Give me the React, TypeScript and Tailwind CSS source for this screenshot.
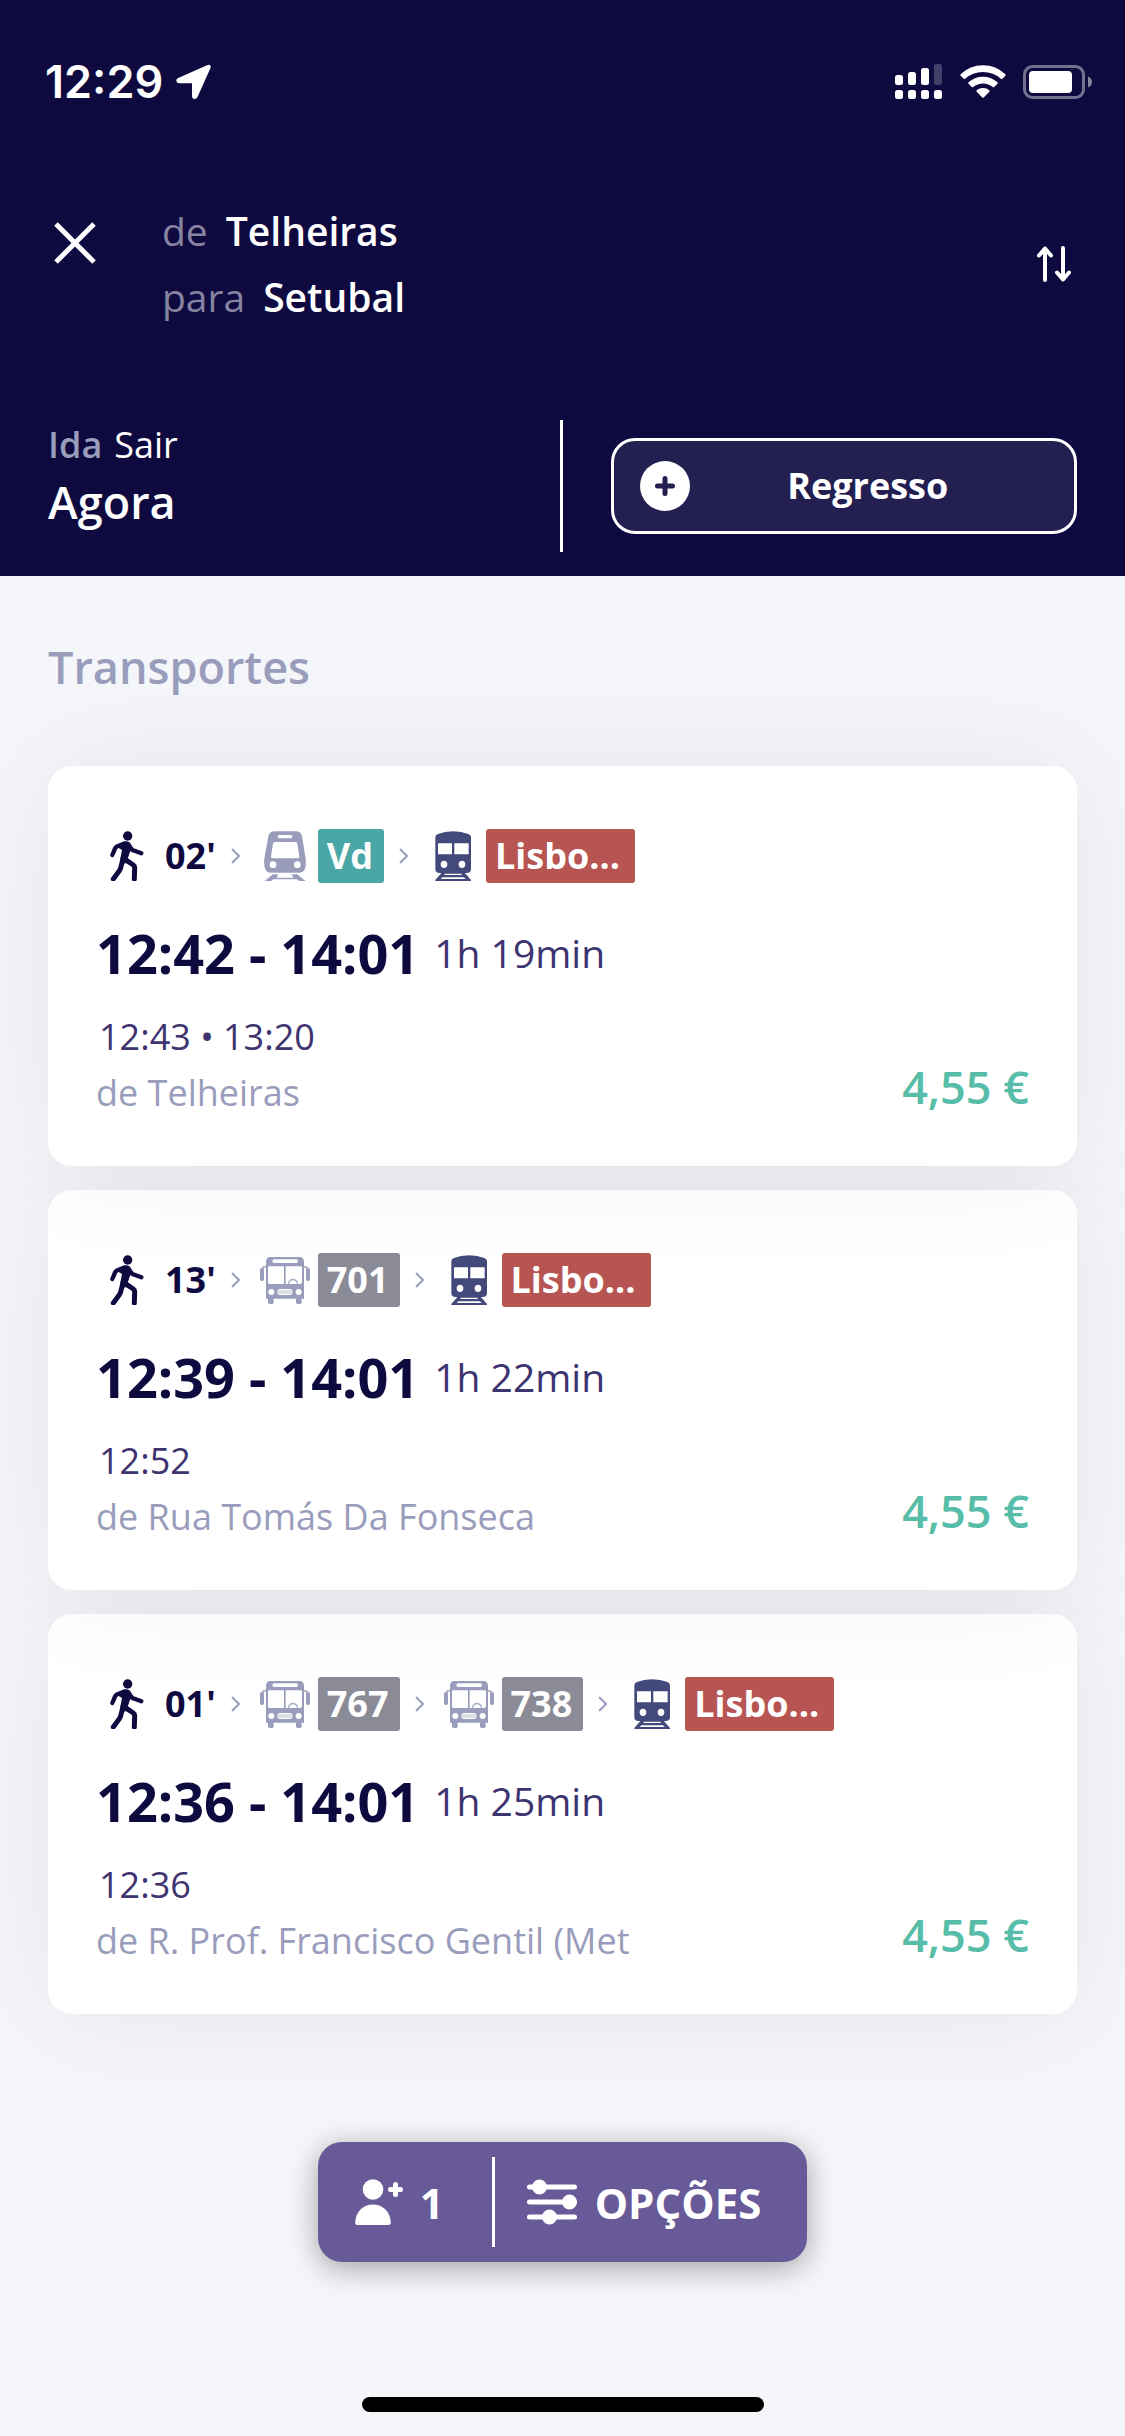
import React from 'react';

type Mode = 'metro' | 'bus' | 'train';

interface Leg {
  mode: Mode;
  line: string;
  color: string;
}

interface Trip {
  id: number;
  walk: string;
  legs: Leg[];
  schedule: string;
  duration: string;
  departures: string;
  origin: string;
  price: string;
  layer: string;
}

const GREEN = 'bg-[#4ba6a6] pr-[11px]';
const GRAY = 'bg-[#8b8a97] pr-[11px]';
const RED = 'bg-[#b75552] pr-[15px]';

// earlier cards sit above the following ones so that their shadow falls on them
const trips: Trip[] = [
  {
    id: 1,
    walk: "02'",
    legs: [
      { mode: 'metro', line: 'Vd', color: GREEN },
      { mode: 'train', line: 'Lisbo...', color: RED },
    ],
    schedule: '12:42 - 14:01',
    duration: '1h 19min',
    departures: '12:43 • 13:20',
    origin: 'de Telheiras',
    price: '4,55 €',
    layer: 'z-30',
  },
  {
    id: 2,
    walk: "13'",
    legs: [
      { mode: 'bus', line: '701', color: GRAY },
      { mode: 'train', line: 'Lisbo...', color: RED },
    ],
    schedule: '12:39 - 14:01',
    duration: '1h 22min',
    departures: '12:52',
    origin: 'de Rua Tomás Da Fonseca',
    price: '4,55 €',
    layer: 'z-20',
  },
  {
    id: 3,
    walk: "01'",
    legs: [
      { mode: 'bus', line: '767', color: GRAY },
      { mode: 'bus', line: '738', color: GRAY },
      { mode: 'train', line: 'Lisbo...', color: RED },
    ],
    schedule: '12:36 - 14:01',
    duration: '1h 25min',
    departures: '12:36',
    origin: 'de R. Prof. Francisco Gentil (Met',
    price: '4,55 €',
    layer: 'z-10',
  },
];

function WalkIcon() {
  return (
    <svg className="h-[50px] w-12 shrink-0" viewBox="42 47 144 150" fill="none" stroke="#0e0a40" strokeLinecap="round" strokeLinejoin="round">
      <circle cx="113" cy="62" r="14" fill="#0e0a40" stroke="none" />
      <path d="M98 79Q110 75 120 82L126 96L119 112L113 130L117 142L92 146L90 134L96 104L86 98Z" fill="#0e0a40" stroke="none" />
      <path d="M102 85L82 93Q77 95 75 100L67 119" strokeWidth="13" />
      <path d="M115 88L127 104L154 114" strokeWidth="13" />
      <path d="M105 132L130 149Q134 152 134 157L133 191" strokeWidth="15" />
      <path d="M98 134L92 158Q91 162 88 166L70 191" strokeWidth="15" />
    </svg>
  );
}

function MetroIcon() {
  return (
    <svg className="h-[50px] w-12 shrink-0" viewBox="516 47 144 150" fill="#999dbb">
      <path
        fillRule="evenodd"
        d="M558 48H620Q636 48 639 63L650 130Q654 172 630 172H546Q522 172 526 130L538 63Q541 48 558 48ZM571 59Q566 59 566 64Q566 69 571 69H605Q610 69 610 64Q610 59 605 59ZM558 80Q553 80 552 85L546 123Q545 129 551 129H626Q632 129 631 123L625 85Q624 80 619 80ZM552 138A10 10 0 1 0 552 158A10 10 0 1 0 552 138ZM625 138A10 10 0 1 0 625 158A10 10 0 1 0 625 138Z"
      />
      <path d="M552 177H566V182H610V177H624L651 198H632L624 192H553L545 198H526Z" />
      <path d="M567 182H609L615 187H561Z" fill="#fff" />
    </svg>
  );
}

function TrainIcon() {
  return (
    <svg className="h-[50px] w-12 shrink-0" viewBox="1020 47 144 150" fill="#43497a">
      <path
        fillRule="evenodd"
        d="M1039 66Q1039 59 1047 56Q1067 48 1092 48Q1118 48 1138 56Q1146 59 1146 66V160Q1146 173 1133 173H1052Q1039 173 1039 160ZM1047 84V117H1089V84ZM1096 84V117H1139V84ZM1065 136A10 11 0 1 0 1065 158A10 11 0 1 0 1065 136ZM1119 136A10 11 0 1 0 1119 158A10 11 0 1 0 1119 136Z"
      />
      <path d="M1060 170H1125L1146 194V198H1039V194Z" />
      <path d="M1068 175H1117L1119 179H1066ZM1060 186H1125L1130 191H1055Z" fill="#fff" />
    </svg>
  );
}

function BusIcon() {
  return (
    <svg className="h-[50px] w-12 shrink-0 overflow-visible" viewBox="33 45 144 150" fill="#999dbb">
      <path
        fillRule="evenodd"
        d="M62 51H148Q162 51 162 66V176H48V66Q48 51 62 51ZM72 58Q67 58 67 63Q67 69 72 69H138Q144 69 144 63Q144 58 138 58ZM58 79Q54 79 54 83V127Q54 132 58 132H102V79ZM107 79V132H151Q156 132 156 127V83Q156 79 151 79ZM64 147A9 9 0 1 0 64 165A9 9 0 1 0 64 147ZM146 147A9 9 0 1 0 146 165A9 9 0 1 0 146 147ZM90 147Q82 147 82 156Q82 165 90 165H120Q128 165 128 156Q128 147 120 147Z"
      />
      <path d="M83 153H127M83 159H127" stroke="#999dbb" strokeWidth="2" />
      <path d="M116 131A13 12 0 0 1 142 131" fill="none" stroke="#999dbb" strokeWidth="4" />
      <path d="M50 81H43Q37 81 37 88M160 81H167Q173 81 173 88" fill="none" stroke="#999dbb" strokeWidth="4" />
      <rect x="30" y="84" width="12" height="39" rx="5" />
      <rect x="168" y="84" width="12" height="39" rx="5" />
      <rect x="54" y="168" width="17" height="24" rx="5" />
      <rect x="138" y="168" width="17" height="24" rx="5" />
    </svg>
  );
}

function Chevron() {
  return (
    <svg className="mr-[21px] ml-[15px] h-4 w-[9px] shrink-0" viewBox="0 0 9 16" fill="none" stroke="#999dbb" strokeWidth="2">
      <path d="M1 1L8 8L1 15" />
    </svg>
  );
}

const modeIcons: Record<Mode, () => React.JSX.Element> = {
  metro: MetroIcon,
  bus: BusIcon,
  train: TrainIcon,
};

function StatusBar() {
  return (
    <div className="flex items-center pt-[52px] pr-8 pl-[45px]">
      <div className="flex h-[60px] flex-1 items-center gap-[13px]">
        <span className="font-['Inter',sans-serif] text-[45px] leading-[60px] font-semibold">12:29</span>
        <svg className="h-9 w-9" viewBox="0 0 36 36" fill="#fff">
          <path d="M31 1.2Q35.500 -.3 34.500 4L21.500 33Q20.500 35 18.500 35Q16 35 16 32V19.200H3Q.5 19.200 .3 16.800Q.2 14.800 2.200 14Z" />
        </svg>
      </div>
      <div className="flex items-center gap-[17px]">
        <svg className="h-9 w-12" viewBox="0 0 48 36" fill="#fff">
          <rect x="0" y="11" width="8" height="10" rx="2.500" />
          <rect x="13" y="8" width="8" height="13" rx="2.500" />
          <rect x="26" y="4" width="8" height="17" rx="2.500" />
          <rect x="39" y="0" width="8" height="21" rx="2.500" fillOpacity=".22" />
          <rect x="0" y="26" width="8" height="9" rx="2.500" />
          <rect x="13" y="26" width="8" height="9" rx="2.500" />
          <rect x="26" y="26" width="8" height="9" rx="2.500" />
          <rect x="39" y="26" width="8" height="9" rx="2.500" />
        </svg>
        <svg className="h-[34px] w-[46px]" viewBox="0 0 46 34" fill="#fff">
          <path d="M.6 9.300Q10 .3 23 .3T45.400 9.300Q46 10 45.400 10.700L42.300 13.800Q41.600 14.500 40.900 13.800Q33.500 7 23 7T5.100 13.800Q4.400 14.500 3.700 13.800L.6 10.700Q0 10 .6 9.300Z" />
          <path d="M8.500 17.300Q14.500 11.700 23 11.700T37.500 17.300Q38.100 18 37.500 18.700L34.200 21.900Q33.500 22.600 32.800 21.900Q28.600 18.400 23 18.400T13.200 21.900Q12.500 22.600 11.800 21.900L8.500 18.700Q7.900 18 8.500 17.300Z" />
          <path d="M16.700 25.200Q19.300 23 23 23T29.300 25.200Q30 26 29.300 26.700L23.700 32.600Q23 33.300 22.300 32.600L16.700 26.700Q16 26 16.700 25.200Z" />
        </svg>
        <svg className="h-[34px] w-[70px]" viewBox="0 0 70 34" fill="#fff">
          <rect x="1.500" y="1.500" width="59" height="31" rx="8" fill="none" stroke="#fff" strokeOpacity=".42" strokeWidth="3" />
          <rect x="6" y="6" width="43" height="22" rx="4" />
          <path d="M65 11.500Q69 13 69 17T65 22.500Z" fillOpacity=".5" />
        </svg>
      </div>
    </div>
  );
}

function Header() {
  return (
    <header className="relative z-10 bg-[#0e0a40] pb-6 text-white">
      <StatusBar />
      <div className="mt-[86px] flex items-center px-12">
        <button type="button" aria-label="Fechar" className="mt-6 flex w-[54px] justify-center self-start">
          <svg className="h-[42px] w-[42px]" viewBox="0 0 42 42" stroke="#fff" strokeWidth="5">
            <path d="M2 2L40 40M40 2L2 40" />
          </svg>
        </button>
        <div className="ml-[60px] flex-1 text-[39px] leading-[66px]">
          <div className="flex gap-[18px]">
            <span className="text-[#8684a0]">de</span>
            <span className="font-semibold">Telheiras</span>
          </div>
          <div className="flex gap-[18px]">
            <span className="text-[#8684a0]">para</span>
            <span className="font-semibold">Setubal</span>
          </div>
        </div>
        <button type="button" aria-label="Trocar origem e destino" className="flex w-[46px] justify-center">
          <svg className="h-9 w-[34px]" viewBox="0 0 34 36" fill="none" stroke="#fff" strokeWidth="4" strokeLinecap="round" strokeLinejoin="round">
            <path d="M8 34V2.500M2 9.500L8 2.500L14 9.500M26 2V33.500M20 26.500L26 33.500L32 26.500" />
          </svg>
        </button>
      </div>
      <div className="mt-[90px] flex px-12">
        <div className="h-[132px] flex-1 border-r-[3px] border-white">
          <div className="flex gap-3 text-[36px] leading-[50px]">
            <span className="font-semibold text-[#999dbb]">Ida</span>
            <span>Sair</span>
          </div>
          <div className="text-[45px] leading-[64px] font-semibold">Agora</div>
        </div>
        <div className="flex w-1/2 items-center pl-12">
          <button type="button" className="flex h-24 w-full items-center rounded-3xl border-[3px] border-white bg-[#231f50] pr-7 pl-[26px]">
            <svg className="h-[50px] w-[50px]" viewBox="0 0 50 50">
              <circle cx="25" cy="25" r="25" fill="#fff" />
              <path d="M25 17.500V32.500M17.500 25H32.500" stroke="#231f50" strokeWidth="5" strokeLinecap="round" />
            </svg>
            <span className="flex-1 text-center text-[36px] leading-[48px] font-bold">Regresso</span>
          </button>
        </div>
      </div>
    </header>
  );
}

function TripCard({ trip }: { trip: Trip }) {
  return (
    <li className={`relative rounded-3xl bg-white px-12 pt-[63px] pb-[45px] shadow-[0_0_120px_rgba(0,0,0,0.07)] ${trip.layer}`}>
      <div className="flex items-center pl-2">
        <WalkIcon />
        <span className="ml-[13px] text-[36px] leading-[54px] font-bold text-[#0e0a40]">{trip.walk}</span>
        {trip.legs.map((leg, i) => {
          const Icon = modeIcons[leg.mode];
          return (
            <div key={i} className="flex items-center">
              <Chevron />
              <Icon />
              <span className={`ml-[9px] rounded-[3px] pl-[9px] text-[36px] leading-[54px] font-bold text-white ${leg.color}`}>
                {leg.line}
              </span>
            </div>
          );
        })}
      </div>
      <div className="mt-[34px] flex items-center gap-[15px]">
        <span className="text-[54px] leading-[72px] font-bold text-[#0e0a40]">{trip.schedule}</span>
        <span className="text-[39px] leading-[72px] text-[#3e346f]">{trip.duration}</span>
      </div>
      <div className="mt-5 flex items-end justify-between">
        <div className="text-[36px] leading-[56px]">
          <div className="pl-[3px] text-[#3e346f]">{trip.departures}</div>
          <div className="text-[#999dbb]">{trip.origin}</div>
        </div>
        <span className="mb-1 text-[45px] leading-[60px] font-semibold text-[#58bda8]">{trip.price}</span>
      </div>
    </li>
  );
}

function OptionsBar() {
  return (
    <div className="relative flex h-[120px] items-center self-center rounded-3xl bg-[#685a98] text-[42px] font-bold text-white shadow-[0_6px_30px_rgba(0,0,0,0.35)]">
      <button type="button" aria-label="Passageiros" className="flex h-[90px] items-center gap-4 border-r-[3px] border-white pr-12 pl-9">
        <svg className="h-12 w-[50px]" viewBox="0 0 50 48" fill="#fff">
          <circle cx="19" cy="11.500" r="10.300" />
          <path d="M1.200 44.500C1.500 34 9 26.500 19 26.500S36.500 34 36.800 44.500Q36.800 47 34.500 47H3.500Q1.200 47 1.200 44.500Z" />
          <path d="M41.500 6.500V16.500M36.500 11.500H46.500" stroke="#fff" strokeWidth="5" strokeLinecap="round" />
        </svg>
        1
      </button>
      <button type="button" className="flex h-[90px] items-center gap-[18px] pr-[46px] pl-8">
        <svg className="h-12 w-[50px]" viewBox="0 0 50 48" fill="#fff" stroke="#fff" strokeWidth="5" strokeLinecap="round">
          <path d="M2.500 9H47.500M2.500 24H47.500M2.500 39H47.500" />
          <circle cx="12.500" cy="9" r="5" />
          <circle cx="42.500" cy="24" r="5" />
          <circle cx="22.500" cy="39" r="5" />
        </svg>
        OPÇÕES
      </button>
    </div>
  );
}

export default function App() {
  return (
    <div className="flex min-h-screen flex-col bg-[#f4f6fa] font-['Open_Sans','Noto_Sans',sans-serif]">
      <Header />
      <main className="px-12 pt-[61px] pb-32">
        <h1 className="relative z-40 mb-[69px] text-[45px] leading-[60px] font-semibold text-[#999dbb]">Transportes</h1>
        <ul className="isolate flex flex-col gap-6">
          {trips.map(trip => (
            <TripCard key={trip.id} trip={trip} />
          ))}
        </ul>
      </main>
      <OptionsBar />
      <div className="mt-auto mb-6 h-[15px] w-[402px] self-center rounded-full bg-black" />
    </div>
  );
}
